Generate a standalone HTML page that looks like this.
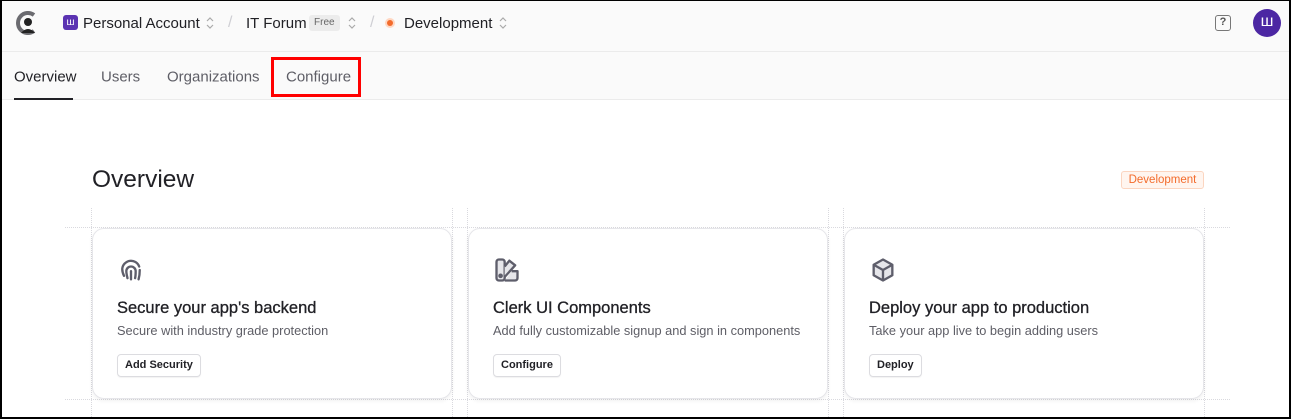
<!DOCTYPE html>
<html><head><meta charset="utf-8"><style>
*{box-sizing:border-box;margin:0;padding:0}
body{width:1291px;height:419px;overflow:hidden;font-family:"Liberation Sans",sans-serif;background:#fff;position:relative;color:#212126}
.frame{position:absolute;inset:0;border:2px solid #000;border-top-width:1px;z-index:10;pointer-events:none}
.hdr{position:absolute;left:0;top:0;width:1291px;height:52px;background:#fafafa;border-bottom:1px solid #ebebeb}
.tabs{position:absolute;left:0;top:52px;width:1291px;height:48px;background:#fafafa;border-bottom:1px solid #ebebeb}
.t{position:absolute;top:77px;font-size:15px;color:#5e5e66;transform:translateY(-50%)}
.abs{position:absolute}
.chev{position:absolute;width:8px;height:12px}
.sl{position:absolute;color:#cfcfd4;font-size:16px}
.vd{position:absolute;top:208px;bottom:0;border-left:1px dotted #d9d9de;width:0}
.hd{position:absolute;left:65px;width:1165px;border-top:1px dotted #d9d9de;height:0}
.card{position:absolute;top:228px;width:360px;height:171px;background:#fff;border:1px solid #e6e6ea;border-radius:12px;box-shadow:0 2px 4px rgba(0,0,0,.06)}
.card h3{position:absolute;left:24px;top:70px;font-size:16.5px;font-weight:normal;color:#212126;-webkit-text-stroke:0.3px #212126}
.card p{position:absolute;left:24px;top:94px;font-size:12.8px;color:#5e5e66}
.card .b{position:absolute;left:24px;top:125px;height:23px;padding:0 7px;border:1px solid #dcdce0;border-radius:4px;font-size:11px;font-weight:bold;line-height:21px;color:#212126;box-shadow:0 1px 1px rgba(0,0,0,.05)}
.card svg{position:absolute;left:24px;top:27px}
</style></head><body>
<div class="frame"></div>
<div class="hdr"></div>
<div class="tabs"></div>
<svg class="abs" style="left:15px;top:10px" width="24" height="26" viewBox="0 0 24 26"><path d="M19 5 A10 10 0 1 0 19 21" fill="none" stroke="#6b6b70" stroke-width="4"/><circle cx="13" cy="12" r="4" fill="#222"/><path d="M6 23 Q13 15 20 23 Z" fill="#222"/></svg>
<div class="abs" style="left:63px;top:15px;width:15px;height:15px;background:#5b33b2;border-radius:3px;color:#fff;font-size:10px;text-align:center;line-height:15px">ш</div>
<div class="abs" style="left:83px;top:15px;font-size:15px;color:#212126">Personal Account</div>
<svg class="chev" style="left:206px;top:17px" viewBox="0 0 8 12"><path d="M1 4l3-3 3 3M1 8l3 3 3-3" fill="none" stroke="#aaa" stroke-width="1.2"/></svg>
<div class="sl" style="left:228px;top:14px">/</div>
<div class="abs" style="left:246px;top:15px;font-size:15px;color:#212126">IT Forum</div>
<div class="abs" style="left:309px;top:15px;height:16px;padding:0 5px;background:#ececec;border-radius:3px;font-size:10px;color:#666;line-height:16px">Free</div>
<svg class="chev" style="left:348px;top:17px" viewBox="0 0 8 12"><path d="M1 4l3-3 3 3M1 8l3 3 3-3" fill="none" stroke="#aaa" stroke-width="1.2"/></svg>
<div class="sl" style="left:370px;top:14px">/</div>
<div class="abs" style="left:385px;top:18px;width:10px;height:10px;border-radius:50%;background:#ffd7c2"></div>
<div class="abs" style="left:387px;top:20px;width:6px;height:6px;border-radius:50%;background:#f36b2b"></div>
<div class="abs" style="left:404px;top:15px;font-size:15px;color:#212126">Development</div>
<svg class="chev" style="left:499px;top:17px" viewBox="0 0 8 12"><path d="M1 4l3-3 3 3M1 8l3 3 3-3" fill="none" stroke="#aaa" stroke-width="1.2"/></svg>
<div class="abs" style="left:1215px;top:15px;width:16px;height:16px;border:1.5px solid #777;border-radius:3px;font-size:11px;color:#555;text-align:center;line-height:13px;font-weight:bold">?</div>
<div class="abs" style="left:1253px;top:9px;width:28px;height:28px;border-radius:50%;background:#4c27a3;color:#fff;text-align:center;font-size:16px;line-height:26px">ш</div>
<div class="t" style="left:14px;color:#212126">Overview</div>
<div class="abs" style="left:14px;top:98px;width:59px;height:2px;background:#212126"></div>
<div class="t" style="left:101px">Users</div>
<div class="t" style="left:167px">Organizations</div>
<div class="t" style="left:286px">Configure</div>
<div class="abs" style="left:271px;top:57px;width:90px;height:40px;border:3px solid #f00"></div>
<div class="abs" style="left:92px;top:166px;font-size:24.5px;color:#212126">Overview</div>
<div class="abs" style="left:1121px;top:171px;width:83px;height:18px;border:1px solid #fbd5c0;background:#fff5ef;border-radius:3px;color:#f36b2b;font-size:11.5px;line-height:16px;text-align:center">Development</div>
<div class="vd" style="left:91px"></div><div class="vd" style="left:452px"></div>
<div class="vd" style="left:467px"></div><div class="vd" style="left:828px"></div>
<div class="vd" style="left:843px"></div><div class="vd" style="left:1204px"></div>
<div class="hd" style="top:227px"></div><div class="hd" style="top:399px"></div>
<div class="card" style="left:92px">
<svg width="28" height="28" viewBox="0 0 24 24" fill="none" stroke="#5e5e6b" stroke-width="2" stroke-linecap="round"><path d="M6 17c-1-2-1.5-4-1.5-6A7.5 7.5 0 0 1 19 9"/><path d="M9 19c-.5-2-1-4-1-6a4 4 0 0 1 8 0c0 2 0 4-.5 6"/><path d="M12 13v7"/><path d="M19.5 12c0 3-.3 5.5-1 8"/></svg>
<h3>Secure your app's backend</h3><p>Secure with industry grade protection</p><div class="b">Add Security</div></div>
<div class="card" style="left:468px">
<svg width="28" height="28" viewBox="0 0 24 24" fill="none" stroke="#5e5e6b" stroke-width="2" stroke-linejoin="round"><rect x="3" y="3" width="7" height="18" rx="2" fill="#e6e6ea"/><path d="M10 9l4-5 5 4-9 10" fill="#e6e6ea"/><path d="M10 21h9a2 2 0 0 0 2-2v-6h-5" fill="#e6e6ea"/><circle cx="6.5" cy="17" r="1" fill="#5e5e6b"/></svg>
<h3>Clerk UI Components</h3><p>Add fully customizable signup and sign in components</p><div class="b">Configure</div></div>
<div class="card" style="left:844px">
<svg width="28" height="28" viewBox="0 0 24 24" fill="none" stroke="#5e5e6b" stroke-width="2" stroke-linejoin="round"><path d="M12 3l8 4.5v9L12 21l-8-4.5v-9z" fill="#e6e6ea"/><path d="M4 7.5l8 4.5 8-4.5M12 12v9"/></svg>
<h3>Deploy your app to production</h3><p>Take your app live to begin adding users</p><div class="b">Deploy</div></div>
</body></html>
